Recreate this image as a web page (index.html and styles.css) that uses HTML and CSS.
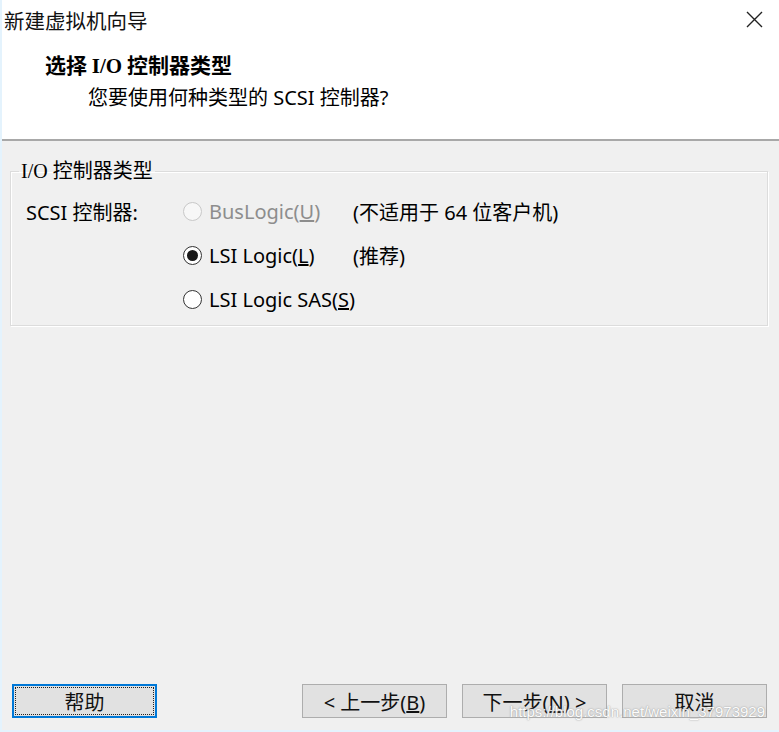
FILE: index.html
```html
<!DOCTYPE html>
<html>
  <head>
    <meta charset="UTF-8">
    <title>新建虚拟机向导</title>
    <link rel="stylesheet" href="styles.css">
  </head>
  <body>
    <div class="window">
      <div class="header">
        <div class="titlebar">
          <span class="title">新建虚拟机向导</span>
          <span class="close">
            <svg width="17" height="17" viewBox="0 0 17 17"><path d="M1 1L16 16M16 1L1 16" stroke="#222" stroke-width="1.4" fill="none"/></svg>
          </span>
        </div>
        <div class="heading">选择 <span class="latin">I/O</span> 控制器类型</div>
        <div class="subtitle">您要使用何种类型的 SCSI 控制器?</div>
      </div>

      <div class="content">
        <fieldset class="group">
          <legend><span class="latin">I/O</span> 控制器类型</legend>
          <div class="rows">
            <span class="label">SCSI 控制器:</span>
            <span class="radio disabled"><i class="dot"></i><span>BusLogic(<u>U</u>)</span></span>
            <span class="note">(不适用于 64 位客户机)</span>

            <span></span>
            <span class="radio"><i class="dot checked"></i><span>LSI Logic(<u>L</u>)</span></span>
            <span class="note">(推荐)</span>

            <span></span>
            <span class="radio"><i class="dot"></i><span>LSI Logic SAS(<u>S</u>)</span></span>
            <span></span>
          </div>
        </fieldset>
      </div>

      <div class="footer">
        <button class="focus">帮助</button>
        <span class="sep"></span>
        <button>&lt; 上一步(<u>B</u>)</button>
        <button>下一步(<u>N</u>) &gt;</button>
        <button>取消</button>
        <span class="watermark">https://blog.csdn.net/weixin_37973929</span>
      </div>
    </div>
  </body>
</html>
```

FILE: styles.css
```css
html, body {
  margin: 0;
  height: 100%;
}

body {
  background: #f0f0f0;
  color: #000;
  font-family: "Noto Sans", "Noto Sans CJK SC", sans-serif;
  font-size: 20px;
}

.window {
  height: 100%;
  display: flex;
  flex-direction: column;
  border-left: 2px solid #e4f3fd;
  box-sizing: border-box;
}

.header {
  background: #fff;
  height: 139px;
  border-bottom: 2px solid #a8a8a8;
  flex-shrink: 0;
}

.titlebar {
  display: flex;
  justify-content: space-between;
  align-items: center;
  height: 40px;
  padding: 0 16px 0 2px;
}
.title {
  font-family: "Noto Sans CJK SC", sans-serif;
  font-size: 20.5px;
  color: #111;
}
.close {
  display: flex;
  margin-top: -2px;
}

.heading {
  margin: 9px 0 0 43px;
  font-family: "Noto Sans CJK SC", sans-serif;
  font-weight: bold;
  font-size: 21px;
  line-height: 30px;
}
.latin {
  font-family: "Liberation Serif", serif;
}
.subtitle {
  margin: 2px 0 0 86px;
  line-height: 30px;
}

.content {
  flex-grow: 1;
  padding: 17px 11px 0 8px;
}

.group {
  margin: 0;
  padding: 2px 0 4px 15px;
  border: 1px solid #dcdcdc;
  box-shadow: inset 1px 1px 0 #fff, 1px 1px 0 #fff;
}
.group legend {
  padding: 0 2px;
  margin-left: -7px;
  line-height: 26px;
}

.rows {
  display: grid;
  grid-template-columns: 157px 170px 1fr;
  grid-auto-rows: 44px;
  align-items: center;
  margin-top: 3px;
  white-space: nowrap;
}
.radio {
  display: flex;
  align-items: center;
  gap: 7px;
}
.radio.disabled {
  color: #8d8d8d;
}
.dot {
  width: 19px;
  height: 19px;
  border: 1px solid #333;
  border-radius: 50%;
  background: #fff;
  display: flex;
  align-items: center;
  justify-content: center;
  box-sizing: border-box;
  flex-shrink: 0;
}
.disabled .dot {
  border-color: #c8c8c8;
  background: #f7f7f7;
}
.dot.checked::after {
  content: "";
  width: 11px;
  height: 11px;
  border-radius: 50%;
  background: #1a1a1a;
}

.footer {
  position: relative;
  display: flex;
  align-items: center;
  gap: 15px;
  padding: 0 12px 12px 10px;
  border-bottom: 2px solid #e4f3fd;
}
.sep {
  flex-grow: 1; /* push the wizard buttons right */
}
button {
  width: 145px;
  height: 34px;
  border: 1px solid #adadad;
  background: #e1e1e1;
  font: inherit;
  color: #111;
  padding: 0;
}
button.focus {
  border: 2px solid #0078d7;
  outline: 1px dotted #222;
  outline-offset: -4px;
}

.watermark {
  position: absolute;
  right: 14px;
  bottom: 10px;
  font-family: "Liberation Sans", sans-serif;
  font-size: 15px;
  color: #fff;
  text-shadow: 0 0 1px #999, 0 0 2px #aaa;
  opacity: 0.9;
}
```
